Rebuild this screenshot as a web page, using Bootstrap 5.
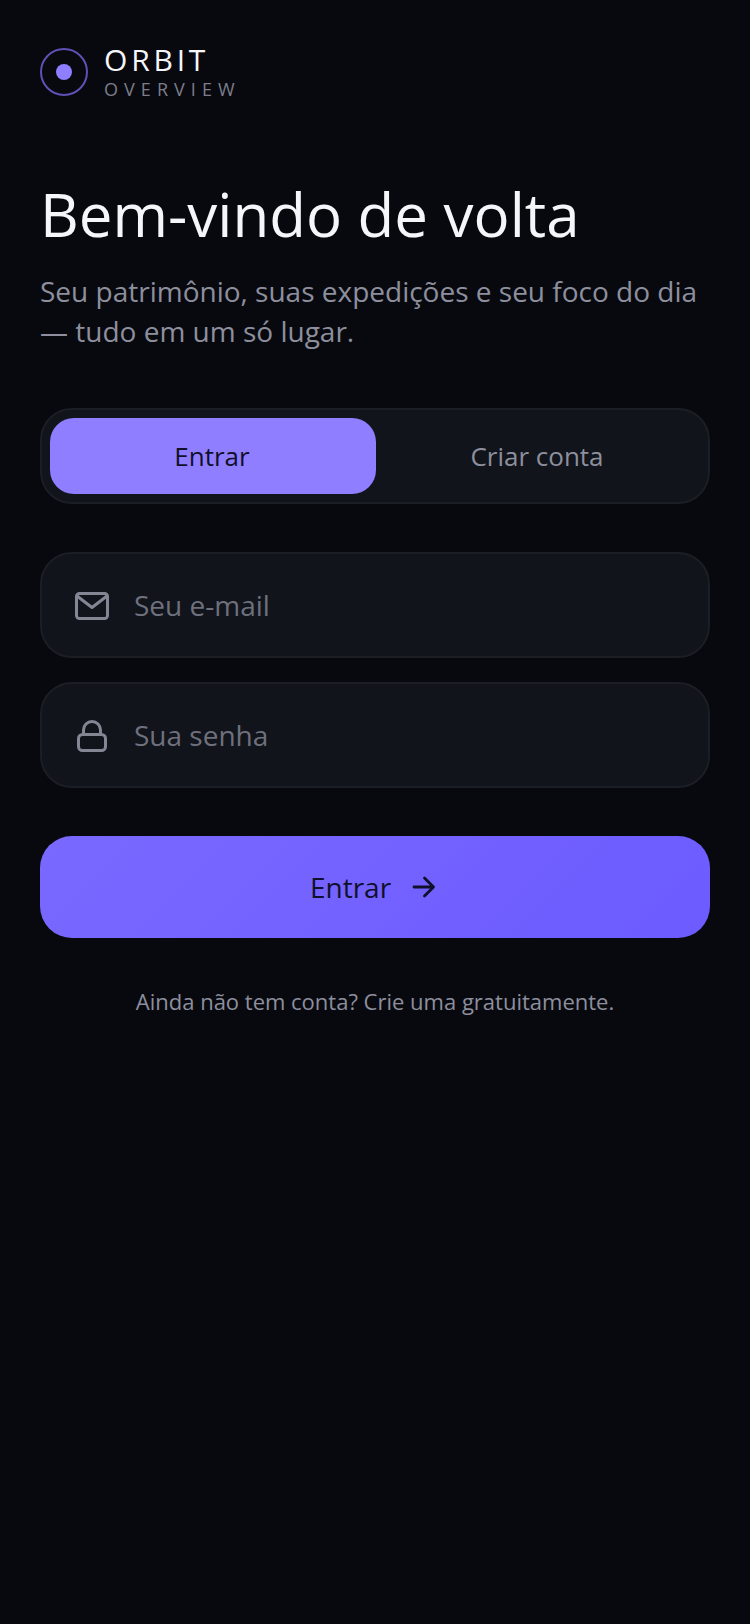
<!DOCTYPE html>
<html lang="pt-BR">
<head>
  <meta charset="UTF-8">
  <title>Orbit</title>
  <link href="https://cdn.jsdelivr.net/npm/bootstrap@5.3.3/dist/css/bootstrap.min.css" rel="stylesheet">
  <style>
    html, body { height: 100%; }
    body { background: #08090e; font-family: "Open Sans", "Noto Sans", sans-serif; }
    .screen { padding: 43px 40px 0; min-height: 1624px; }
    .logo-ring { width: 48px; height: 48px; border: 2px solid #5f50b5; border-radius: 50%; }
    .logo-dot { width: 16px; height: 16px; background: #8f7eff; border-radius: 50%; }
    .brand-name { color: #f5f6fa; font-size: 30px; line-height: 34px; letter-spacing: 3.8px; }
    .brand-sub { color: #7c7e8b; font-size: 18px; line-height: 22px; letter-spacing: 6.05px; margin-top: 1px; }
    .hero-title { color: #f5f6fa; font-size: 60px; line-height: 72px; font-weight: 400; margin: 78px 0 21px; }
    .hero-text { color: #8d8f9e; font-size: 28px; line-height: 40px; margin-bottom: 57px; }
    .switcher { height: 96px; padding: 8px; background: #11141b; border: 2px solid #1b1e25; border-radius: 32px; }
    .switch-btn { flex: 1 1 0; border: 0; background: transparent; color: #8d8f9e; font-size: 26px; border-radius: 24px; padding: 0 2px 0 0; }
    .switch-btn.on { flex: 0 0 326px; background: #8f7eff; color: #10102a; }
    .field { height: 106px; padding: 0 32px; background: #11141b; border: 2px solid #1b1e25; border-radius: 32px; gap: 24px; }
    .field input { background: transparent; border: 0; outline: 0; color: #f5f6fa; font-size: 28px; padding: 0; width: 100%; }
    .field input::placeholder { color: #6e707d; opacity: 1; }
    .field-icon { width: 36px; height: 36px; flex: none; }
    .main-btn { height: 102px; margin-top: 48px; border: 0; border-radius: 32px; background: linear-gradient(135deg, #7a69ff, #6c5bff); color: #10102a; font-size: 28px; gap: 20px; }
    .foot-text { color: #8d8f9e; font-size: 22px; line-height: 32px; margin-top: 47px; }
  </style>
</head>
<body>
  <div class="screen">
    <!-- logo -->
    <div class="d-flex align-items-center gap-3">
      <div class="logo-ring d-flex align-items-center justify-content-center">
        <div class="logo-dot"></div>
      </div>
      <div>
        <div class="brand-name">ORBIT</div>
        <div class="brand-sub">OVERVIEW</div>
      </div>
    </div>

    <h1 class="hero-title">Bem-vindo de volta</h1>
    <p class="hero-text">Seu patrimônio, suas expedições e seu foco do dia — tudo em um só lugar.</p>

    <div class="switcher d-flex">
      <button type="button" class="switch-btn on">Entrar</button>
      <button type="button" class="switch-btn">Criar conta</button>
    </div>

    <form>
      <div class="field d-flex align-items-center mt-5 mb-4">
        <svg class="field-icon" viewBox="0 0 36 36" fill="none" stroke="#848694" stroke-width="3" stroke-linecap="round" stroke-linejoin="round">
          <rect x="2.5" y="6.5" width="31" height="25" rx="3"/>
          <path d="M3 9l15 11.5L33 9"/>
        </svg>
        <input type="email" placeholder="Seu e-mail">
      </div>
      <div class="field d-flex align-items-center">
        <svg class="field-icon" viewBox="0 0 36 36" fill="none" stroke="#848694" stroke-width="3" stroke-linecap="round" stroke-linejoin="round">
          <rect x="4.5" y="17.5" width="27" height="16" rx="4"/>
          <path d="M9.5 17v-4a8.5 8.5 0 0 1 17 0v4"/>
        </svg>
        <input type="password" placeholder="Sua senha">
      </div>
      <button type="button" class="main-btn w-100 d-flex align-items-center justify-content-center">
        Entrar
        <svg width="29" height="26" viewBox="0 0 29 26" fill="none" stroke="#10102a" stroke-width="2.8" stroke-linecap="round" stroke-linejoin="round">
          <path d="M3 13h19M13.5 4l9 9-9 9"/>
        </svg>
      </button>
    </form>

    <p class="foot-text text-center">Ainda não tem conta? Crie uma gratuitamente.</p>
  </div>
  <script src="https://cdn.jsdelivr.net/npm/bootstrap@5.3.3/dist/js/bootstrap.bundle.min.js"></script>
</body>
</html>
